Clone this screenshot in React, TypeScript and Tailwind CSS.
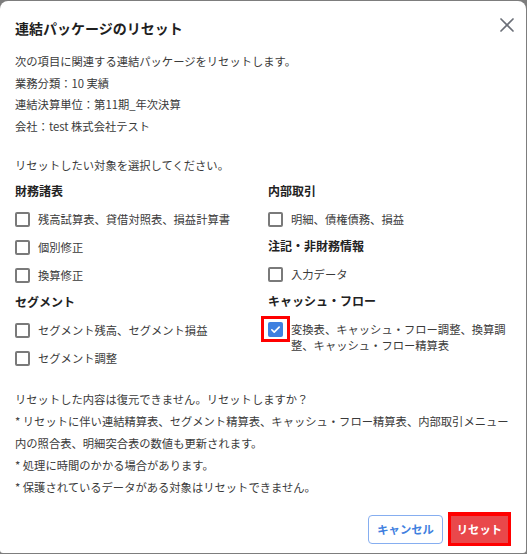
import { X } from "lucide-react";

type Item = { label: string; checked?: boolean; marked?: boolean };
type Group = { title: string; items: Item[] };

const leftGroups: Group[] = [
    {
        title: "財務諸表",
        items: [
            { label: "残高試算表、貸借対照表、損益計算書" },
            { label: "個別修正" },
            { label: "換算修正" },
        ],
    },
    {
        title: "セグメント",
        items: [
            { label: "セグメント残高、セグメント損益" },
            { label: "セグメント調整" },
        ],
    },
];

const rightGroups: Group[] = [
    { title: "内部取引", items: [{ label: "明細、債権債務、損益" }] },
    { title: "注記・非財務情報", items: [{ label: "入力データ" }] },
    {
        title: "キャッシュ・フロー",
        items: [
            {
                label: "変換表、キャッシュ・フロー調整、換算調整、キャッシュ・フロー精算表",
                checked: true,
                marked: true,
            },
        ],
    },
];

const CheckRow = ({ item }: { item: Item }) => (
    <label className="flex items-start gap-[8px] min-h-[28px] pt-[6px]">
        <span className="relative shrink-0 mt-px">
            {item.checked ? (
                <span className="flex w-[15px] h-[15px] items-center justify-center rounded-[2px] bg-[#3f80e0]">
                    <svg width="11" height="11" viewBox="0 0 12 12" fill="none">
                        <path d="M2 6.3l2.6 2.6L10 3.5" stroke="white" strokeWidth="1.8" strokeLinecap="round" strokeLinejoin="round" />
                    </svg>
                </span>
            ) : (
                <span className="block w-[15px] h-[15px] rounded-[2px] border-2 border-[#7a7a7a] bg-white" />
            )}
            {item.marked && (
                <span className="absolute -left-[7px] -top-[6px] w-[29px] h-[26px] border-[3px] border-[#ff0000]" />
            )}
        </span>
        <span className="text-[11.3px] leading-[16px] text-[#3a3a3a]">{item.label}</span>
    </label>
);

const GroupBlock = ({ group }: { group: Group }) => (
    <div>
        <div className="h-[27px] flex items-center text-[12px] font-bold text-[#222]">
            {group.title}
        </div>
        {group.items.map((item) => (
            <CheckRow key={item.label} item={item} />
        ))}
    </div>
);

export default function App() {
    return (
        <div
            className="w-[527px] h-[554px] bg-[#7d7d7d] pt-px overflow-hidden"
            style={{ fontFamily: '"Noto Sans CJK JP", "Noto Sans", sans-serif' }}
        >
            <div className="w-[526px] h-[552px] bg-white rounded-t-[8px] rounded-b-[3px] flex flex-col">

                {/* HEADER */}
                <div className="flex items-center justify-between pl-[15px] pr-[7px] pt-[14px] h-[40px]">
                    <h2 className="text-[14px] font-bold leading-[24px] text-[#1f1f1f]">
                        連結パッケージのリセット
                    </h2>
                    <X size={24} strokeWidth={1.7} className="text-[#6b6f78] -mt-[7px]" />
                </div>

                {/* BODY */}
                <div className="px-[15px] pt-[10px] text-[11.3px] text-[#3a3a3a]">
                    <div className="leading-[21.5px]">
                        <p>次の項目に関連する連結パッケージをリセットします。</p>
                        <p>業務分類：10 実績</p>
                        <p>連結決算単位：第11期_年次決算</p>
                        <p>会社：test 株式会社テスト</p>
                    </div>

                    <p className="mt-[18px] leading-[21.5px]">リセットしたい対象を選択してください。</p>

                    <div className="grid grid-cols-2 gap-x-[10px] mt-[1px]">
                        <div>
                            {leftGroups.map((g) => (
                                <GroupBlock key={g.title} group={g} />
                            ))}
                        </div>
                        <div>
                            {rightGroups.map((g) => (
                                <GroupBlock key={g.title} group={g} />
                            ))}
                        </div>
                    </div>

                    <div className="mt-[16px] leading-[22px]">
                        <p>リセットした内容は復元できません。リセットしますか？</p>
                        <p>* リセットに伴い連結精算表、セグメント精算表、キャッシュ・フロー精算表、内部取引メニュー内の照合表、明細突合表の数値も更新されます。</p>
                        <p>* 処理に時間のかかる場合があります。</p>
                        <p>* 保護されているデータがある対象はリセットできません。</p>
                    </div>
                </div>

                {/* FOOTER */}
                <div className="mt-auto flex justify-end items-center gap-[5px] pr-[15px] pb-[7px]">
                    <button className="h-[29px] px-[8px] rounded-[4px] border border-[#86aef0] bg-white text-[11.3px] font-bold text-[#3f80e0]">
                        キャンセル
                    </button>
                    <div className="p-[3px] bg-[#ff0000]">
                        <button className="h-[27px] px-[6px] bg-[#e9484b] text-[11.3px] font-bold text-white">
                            リセット
                        </button>
                    </div>
                </div>
            </div>
        </div>
    );
}
